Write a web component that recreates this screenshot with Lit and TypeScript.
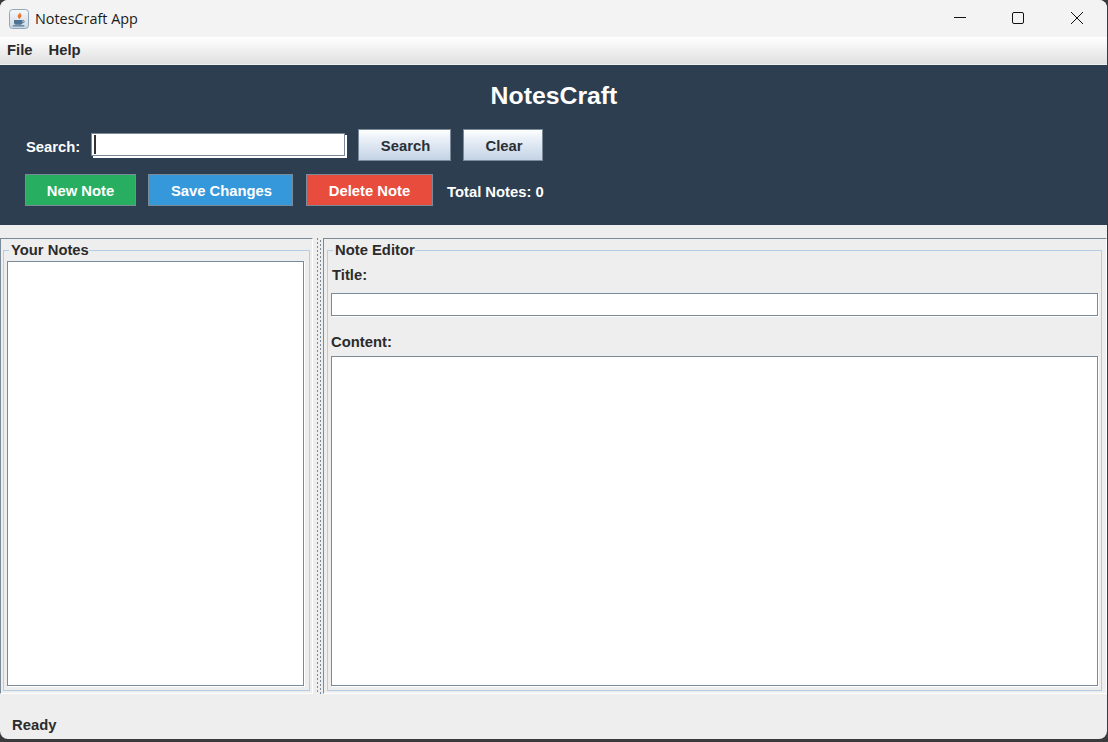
import {LitElement, html, css} from 'lit';
import {customElement} from 'lit/decorators.js';

@customElement('app-root')
export class AppRoot extends LitElement {
  static styles = css`
    :host {
      display: block;
      width: 1108px;
      height: 742px;
      overflow: hidden;
      background: #3a3a3c;
      font-family: "Liberation Sans", Arial, sans-serif;
      font-size: 14.8px;
      font-weight: 700;
      color: #2b2b2b;
    }

    .window {
      width: 1107px;
      height: 739px;
      display: flex;
      flex-direction: column;
      overflow: hidden;
      border-radius: 8px;
      background: #eeeeee;
    }

    /* native title bar */
    .titlebar {
      height: 37px;
      flex: none;
      display: flex;
      align-items: center;
      background: #f3f3f3;
      padding: 0 1px 0 9px;
      font-family: "Open Sans", sans-serif;
      font-weight: 400;
      font-size: 14.4px;
      color: #1a1a1a;
    }
    .app-icon { width: 20px; height: 20px; margin-right: 6px; flex: none; }
    .title-text { flex: 1; }
    .win-btn {
      width: 58.5px;
      height: 36px;
      align-self: flex-start;
      display: flex;
      align-items: center;
      justify-content: center;
    }
    .win-btn svg { width: 14px; height: 14px; display: block; }

    .menubar {
      height: 28px;
      flex: none;
      display: flex;
      align-items: center;
      gap: 16px;
      padding: 0 7px 1.5px;
      box-sizing: border-box;
      background: linear-gradient(#ffffff, #e0e0e0);
      border-bottom: 1px solid #f0f0f0;
    }

    .header {
      height: 160px;
      flex: none;
      box-sizing: border-box;
      padding-top: 16px;
      display: flex;
      flex-direction: column;
      background: #2c3e50;
      color: #fff;
    }
    .app-title {
      height: 30px;
      line-height: 30px;
      font-size: 24.8px;
      text-align: center;
      margin-bottom: 18px;
      padding-left: 1px;
    }
    .row { display: flex; align-items: center; height: 32px; }
    .row.search { padding-left: 26px; margin-bottom: 13px; }
    .row.actions { padding-left: 25px; }
    .search-label { width: 65px; padding-top: 3px; }
    .total { padding-top: 3px; }

    .search-box {
      width: 252px;
      height: 21px;
      align-self: flex-start;
      margin: 4px 13px 0 0;
      display: flex;
      align-items: center;
      background: #fff;
      border: 1px solid #7a8a99;
      box-shadow: 2px 2px 0 #fff;
    }
    .caret { width: 2px; height: 19px; margin-left: 2px; background: #333; flex: none; }

    button {
      height: 32px;
      box-sizing: border-box;
      padding: 1px 0 0 2px;
      font: inherit;
      border: 1px solid #7a8a99;
    }
    .plain {
      margin-right: 12px;
      color: #2b2f36;
      background: linear-gradient(#ffffff, #eef3f9 22%, #c3d3e5);
    }
    .flat { color: #fff; }
    .green { width: 111px; margin-right: 12px; padding-left: 0; background: #27ae60; }
    .blue { width: 145px; margin-right: 13px; background: #3498db; }
    .red { width: 127px; margin-right: 14px; padding-left: 0; background: #e74c3c; }

    /* split pane */
    .split {
      height: 456px;
      flex: none;
      margin-top: 13px;
      display: flex;
    }
    .panel {
      display: flex;
      box-sizing: border-box;
      padding: 3px 2px 2px 2px;
      border: 1px solid;
      border-color: #7a8a99 #ffffff #ffffff #7a8a99;
    }
    .panel.left { width: 313px; flex: none; }
    .panel.right { flex: 1; min-width: 0; padding: 3px 4px 2px 3px; }
    .divider {
      width: 10px;
      flex: none;
      background:
        repeating-linear-gradient(#7a8a99 0 2px, transparent 2px 4px) 4px 0 / 1px 100% no-repeat,
        repeating-linear-gradient(transparent 0 2px, #7a8a99 2px 4px) 7px 0 / 1px 100% no-repeat;
    }
    fieldset {
      flex: 1;
      min-width: 0;
      margin: 0;
      padding: 3px 3px 4px 3px;
      border: 1px solid #b4cde6;
      display: flex;
      flex-direction: column;
    }
    .panel.left fieldset { padding-right: 5px; }
    legend {
      margin-left: 2px;
      padding: 0 0 0 2px;
      line-height: 16px;
    }
    .field {
      box-sizing: border-box;
      border: 1px solid #7a8a99;
      background: #fff;
      box-shadow: 1px 1px 0 #fff;
    }
    .list { flex: 1; }
    .label { line-height: 16px; }
    .label.title { margin: 6px 0 0 1px; }
    .input { height: 23px; margin-top: 10px; }
    .label.content { margin-top: 18px; }
    .area { flex: 1; margin-top: 6px; }

    .status {
      flex: 1;
      display: flex;
      align-items: flex-end;
      padding: 0 0 6px 12px;
    }
  `;

  render() {
    return html`
      <div class="window">
        <div class="titlebar">
          <svg class="app-icon" viewBox="0 0 20 20">
            <defs>
              <linearGradient id="tile" x1="0" y1="0" x2="0" y2="1">
                <stop offset="0" stop-color="#f6f8fa"></stop>
                <stop offset="1" stop-color="#ccd7e2"></stop>
              </linearGradient>
            </defs>
            <rect x="0.5" y="0.5" width="19" height="19" rx="3" fill="url(#tile)" stroke="#8fa6bb"></rect>
            <path d="M10.800 2.500c1.200 2-2.800 3-2 5.300.3 1 1.200 1.700 1.600 2.400 1-1.700 2.800-2.500 1.800-4.500-.5-1-1.400-1.600-1.400-3.200z" fill="#e8772e"></path>
            <path d="M5 11h8.500v2.400c0 1.500-1.200 2.300-2.600 2.300H7.600C6.200 15.700 5 14.900 5 13.400z" fill="#4f7493"></path>
            <path d="M13.500 11.600h1c1 0 1 2-.2 2h-1" fill="none" stroke="#4f7493"></path>
            <rect x="3.500" y="16.200" width="12" height="1.400" rx=".7" fill="#4f7493"></rect>
          </svg>
          <span class="title-text">NotesCraft App</span>
          <div class="win-btn">
            <svg viewBox="0 0 14 14"><path d="M1 6.500h12" stroke="#111" fill="none"></path></svg>
          </div>
          <div class="win-btn">
            <svg viewBox="0 0 14 14"><rect x="1.500" y="1.500" width="11" height="11" rx="1.500" stroke="#111" fill="none"></rect></svg>
          </div>
          <div class="win-btn">
            <svg viewBox="0 0 14 14"><path d="M1 1l12 12M13 1L1 13" stroke="#111" fill="none"></path></svg>
          </div>
        </div>

        <div class="menubar"><span>File</span><span>Help</span></div>

        <div class="header">
          <div class="app-title">NotesCraft</div>
          <div class="row search">
            <span class="search-label">Search:</span>
            <div class="search-box"><span class="caret"></span></div>
            <button class="plain" style="width:93px">Search</button>
            <button class="plain" style="width:80px">Clear</button>
          </div>
          <div class="row actions">
            <button class="flat green">New Note</button>
            <button class="flat blue">Save Changes</button>
            <button class="flat red">Delete Note</button>
            <span class="total">Total Notes: 0</span>
          </div>
        </div>

        <div class="split">
          <div class="panel left">
            <fieldset>
              <legend>Your Notes</legend>
              <div class="field list"></div>
            </fieldset>
          </div>
          <div class="divider"></div>
          <div class="panel right">
            <fieldset>
              <legend>Note Editor</legend>
              <div class="label title">Title:</div>
              <div class="field input"></div>
              <div class="label content">Content:</div>
              <div class="field area"></div>
            </fieldset>
          </div>
        </div>

        <div class="status">Ready</div>
      </div>
    `;
  }
}
